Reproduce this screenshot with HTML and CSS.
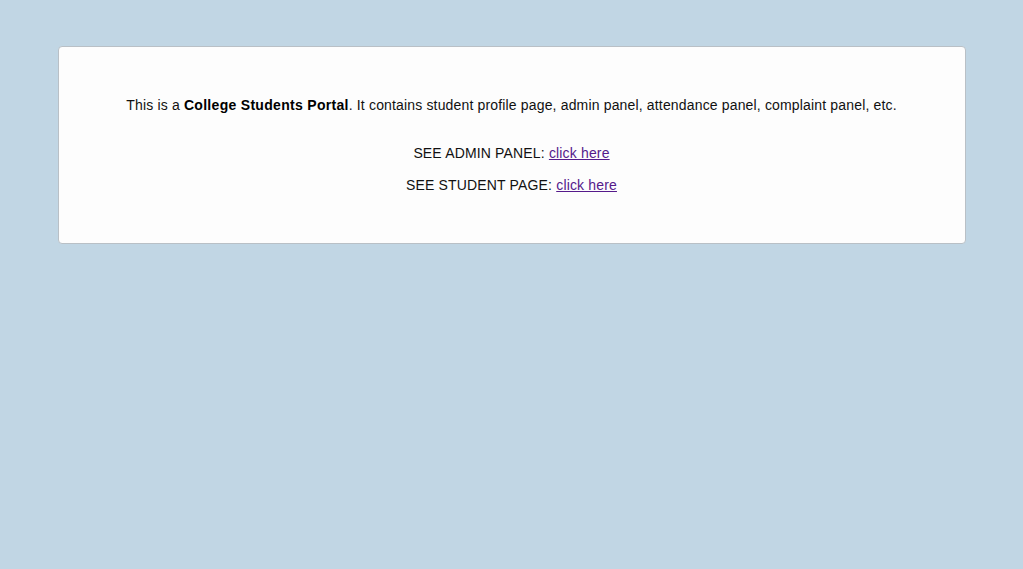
FILE: index.html
```html
<!DOCTYPE html>
<html>
<head>
<meta charset="utf-8">
<title>College Students Portal</title>
<link rel="stylesheet" href="styles.css">
</head>
<body>
<div class="card">
  <p class="intro">This is a <strong>College Students Portal</strong>. It contains student profile page, admin panel, attendance panel, complaint panel, etc.</p>
  <p class="link-row">SEE ADMIN PANEL: <a href="#">click here</a></p>
  <p class="link-row">SEE STUDENT PAGE: <a href="#">click here</a></p>
</div>
</body>
</html>
```
FILE: styles.css
```css
html, body {
  margin: 0;
  padding: 0;
}
body {
  background: #c1d6e4;
  font-family: "Liberation Sans", Arial, sans-serif;
  font-size: 14px;
  color: #111;
  padding-top: 46px;
}
.card {
  width: 866px;
  margin: 0 auto;
  background: #fdfdfd;
  border: 1px solid #b9c0c6;
  border-radius: 4px;
  padding: 49px 20px 49px;
  text-align: center;
  letter-spacing: 0.16px;
}
.card p {
  margin: 0;
  line-height: 18px;
}
.card .intro {
  margin-bottom: 30px;
}
.card .link-row + .link-row {
  margin-top: 14px;
}
.card strong {
  color: #000;
  letter-spacing: 0.3px;
}
.card a {
  color: #551a8b;
  text-decoration: underline;
}
```
